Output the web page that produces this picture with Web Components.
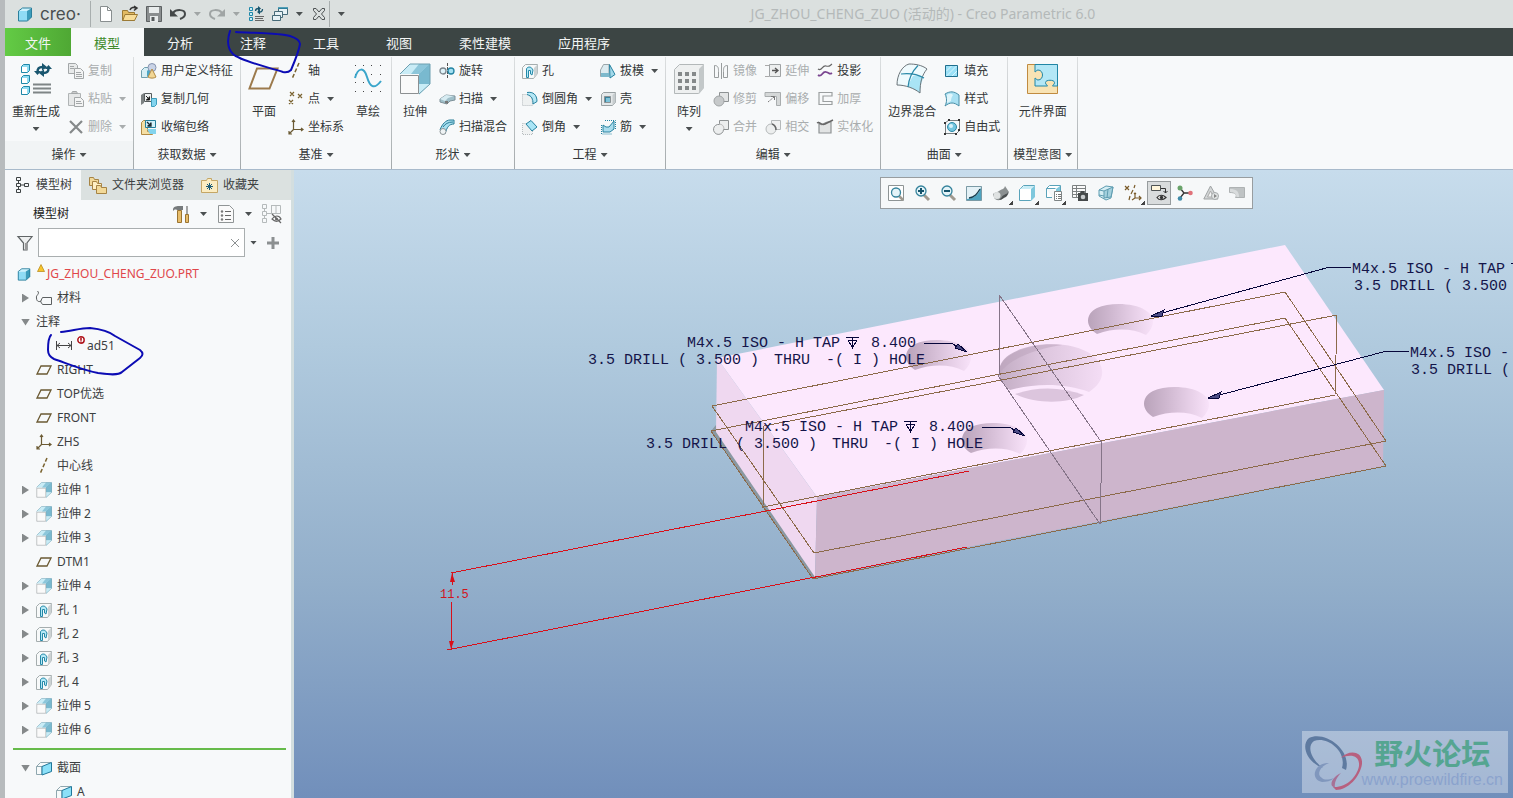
<!DOCTYPE html>
<html lang="zh-CN">
<meta charset="UTF-8">
<title>JG_ZHOU_CHENG_ZUO (活动的) - Creo Parametric 6.0</title>
<style>
  html, body {
    margin: 0;
    height: 100%;
    overflow: hidden;
  }
  body {
    font: 12px/18px "Noto Sans", "Noto Sans CJK SC", sans-serif;
    color: #3c4041;
  }
</style>

<creo-app></creo-app>

<script>
// ---- icon drawings: [viewBox size, svg content] ----
const CUBE = '<path fill="#8fdcf5" d="M1 5h9v10H1z"/><path fill="#cdf2fd" d="M1 5l4-3h10l-5 3z"/><path fill="#3b9cbb" d="M10 5l5-3v9l-5 4z"/><path fill="none" stroke="#2b7f9b" d="M1.500 5l4-3h9v9l-4 4h-9z"/>';
const PLANE = '<path fill="none" stroke="#6b5a33" stroke-width="1.3" d="M5 4h10l-4 8H1z"/>';
const EXTRUDE = '<path fill="#c9ecf6" d="M1 11L11 1h20L20 11z"/><path fill="#4f9fbb" d="M31 1v20L20 11z"/><path fill="#8cc6da" d="M20 1h11L20 11h-8z"/><path fill="#79b9cf" d="M31 1v20H20V11z"/><path fill="#c8ecf6" d="M20 21h11L20 32z"/><path fill="none" stroke="#6d9fb0" d="M1 11L11 1h20v20L20 31"/><path fill="#fafafa" stroke="#8c9092" d="M1.500 12.500h18v18h-18z"/>';
const HOLE = '<path fill="#f7f9f9" stroke="#a5adae" d="M.5 4.500l3-3h12v9l-4 5H.5z"/><path fill="#ccd2d3" d="M12 5l3.500-3.500v9L12 15z"/><path fill="#b5e9f7" stroke="#2589a8" d="M4.500 14.500V6C5 3.500 9 3.500 10 5.500l1 1.500-1 5-1.500-1V7.500h-2v7z"/>';
const SECTION = '<path fill="#f7fafa" stroke="#8fa7af" d="M.5 6.500l4-4h10.500M.5 6.500v8H6v-8H.500"/><path fill="#8be0f8" stroke="#20779a" d="M6 6.500l9.500-4v9L6 15z"/>';
const CSYS = '<path fill="none" stroke="#6b5a33" stroke-width="1.200" d="M5.500 1v9.500H15M5.500 10.500L1 15M4 3l1.500-2L7 3M13 9l2 1.500-2 1.500M1 12v3h3"/>';
const AXIS = '<path stroke="#7a6330" stroke-width="1.500" stroke-dasharray="4 2" d="M11 0L4 16"/>';
const LENS = '<path stroke="#a09a90" stroke-width="3" d="M10 10l5 5"/><circle cx="7" cy="6" r="5" fill="#e3f3f8" stroke="#35839c" stroke-width="1.300"/>';

const ICONS = {
  logo: [16, CUBE],
  part: [16, CUBE],
  fresh: [16, '<path fill="#fff" stroke="#888e8f" d="M2.500.5h7l4 4v11h-11z"/><path fill="none" stroke="#888e8f" d="M9.500.5v4h4"/>'],
  open: [16, '<path fill="#e2ba62" stroke="#9b7a35" d="M.5 4.500h5l1 2h6v8H.5z"/><path fill="#f8dd98" stroke="#9b7a35" d="M3 8.500h12.500l-3 6H.8z"/><path fill="none" stroke="#333" stroke-width="1.500" d="M8 4c1-3 4-3 6-2M12 0l3 2-3 2.500"/>'],
  save: [16, '<path fill="#8a8e8f" stroke="#5c6162" d="M.5.500h15v15H.5z"/><path fill="#e8ecec" d="M3 1h10v6H3zM4 10h8v6H4z"/><path fill="#55595a" d="M5.500 11h3v4h-3z"/>'],
  undo: [16, '<path fill="none" stroke="#444849" stroke-width="2" d="M3 7c3-4 12-4 12 1 0 2-2 4-5 5"/><path fill="#444849" d="M0 3v7.500h8z"/>'],
  redo: [16, '<path fill="none" stroke="#a0a5a5" stroke-width="2" d="M13 7C10 3 1 3 1 8c0 2 2 4 5 5"/><path fill="#a0a5a5" d="M16 3v7.500H8z"/>'],
  regen: [16, '<g fill="#c6eefa" stroke="#1f87a8"><path d="M1.500 1.500h3v3h-3zM1.500 6.500h3v3h-3zM1.500 11.500h3v3h-3z"/></g><path stroke="#666" d="M7 10.500h9M7 12.500h8M7 14.500h9"/><path fill="none" stroke="#19566f" stroke-width="1.300" d="M7.500 5c0-2 1-2.500 3-2.500M14.500 3c0 2-1 3-3 3"/><path fill="#19566f" d="M10 0l3 2.500-3 2.500zM12 3.500L9 6l3 2.500z"/>'],
  windows: [16, '<g fill="#e6f1f5" stroke="#466a78"><path d="M6.500 2.500h9v6h-9z"/><path d="M2.500 5.500h8v6h-8z"/><path d="M.5 9.500h8v5h-8z"/></g><path stroke="#2589a8" stroke-width="1.500" d="M6 2h10"/>'],
  closewin: [16, '<path fill="none" stroke="#4e5354" d="M2.500 2.500H5L8 6l3-3.500h2.500v2L10.500 8l3 3.500v2H11L8 10l-3 3.500H2.500v-2l3-3.500-3-3.500z"/>'],
  bigregen: [32, '<g fill="#8fdcf2" stroke="#1f87a8"><path d="M1.500 3.500l2-2h6v6l-2 2h-6zM1.500 14.500l2-2h6v6l-2 2h-6zM1.500 25.500l2-2h6v6l-2 2h-6z"/></g><path fill="#fff" d="M2 4h5v5H2zM2 15h5v5H2zM2 26h5v5H2z"/><path stroke="#7f8586" stroke-width="1.800" d="M13 21.500h18M13 25.500h18M13 29.500h18"/><path fill="none" stroke="#19566f" stroke-width="2.500" d="M17.500 9c0-4 1.500-5 5-5M28.500 5c0 4-1.500 5-5 5"/><path fill="#19566f" d="M22 0l5 4-5 4zM24 6l-5 4 5 4zM14 8h7l-3.500 4zM25 6h7l-3.500-4z"/>'],
  copy: [16, '<path fill="#e8eaea" stroke="#a3a7a8" d="M.5.500h7l2 2v8h-9z"/><path fill="#f3f4f4" stroke="#a3a7a8" d="M6.500 5.500h6l3 3v7h-9z"/><path stroke="#a3a7a8" d="M2 3.500h4M2 5.500h4M8 9.500h5M8 11.500h6M8 13.500h6"/>'],
  paste: [16, '<path fill="#e6e8e8" stroke="#b0b4b5" d="M.5 2.500h12v12H.5z"/><path fill="#ccc" stroke="#a3a7a8" d="M3.500 2.500l1-2h4l1 2z"/><path fill="#f3f4f4" stroke="#a3a7a8" d="M6.500 6.500h6l3 3v6h-9z"/><path stroke="#a3a7a8" d="M8 10.500h5M8 12.500h6"/>'],
  remove: [16, '<path stroke="#85898a" stroke-width="2.200" d="M2 2l12 12M14 2L2 14"/>'],
  udf: [16, '<path fill="#d6eef5" stroke="#6f9fae" d="M.5 7.500l3-3h5v8l-2 2h-6z"/><path fill="#4aa6c6" d="M6 8l3-3v7l-3 2z"/><circle cx="11" cy="4.500" r="4" fill="#c9d3e6" stroke="#8795b0"/><path fill="#f2d796" stroke="#b18a44" d="M11 6l4 8c-2 1.500-6 1.500-8 0z"/>'],
  copygeom: [16, '<path fill="#7d8283" d="M0 4l3-2v10l-3 2z"/><path fill="#eef1f1" stroke="#555b5c" d="M3.500 2.500h7v8h-7z"/><path stroke="#222" d="M5 5l3.500 3.500M8.500 5.500v3.500H5"/><path fill="#83d4ee" stroke="#3d9dbb" d="M10.500 7.500h5v6l-2 2h-3z"/>'],
  shrink: [16, '<path fill="#f5dfa4" stroke="#b18a44" d="M.5 3.500l2-2h4v11l5 1v2H.5z"/><path fill="#d2f1fa" stroke="#247f9d" d="M4.500 1.500h10v7h-10z"/><path stroke="#1c2c33" stroke-width="1.300" d="M6 3l4 4M10 3.500V7H6.500"/><path fill="#83d4ee" d="M6 10h9v5H9z"/>'],
  bigplane: [32, '<path fill="none" stroke="#9c7a4c" stroke-width="2" d="M9 5.500h20.500l-8 20H1.500z"/>'],
  axis: [16, AXIS], csys: [16, CSYS], plane: [16, PLANE],
  point: [16, '<path fill="none" stroke="#7a6330" stroke-width="1.200" d="M2 1l4 4M6 1L2 5M10 3l4 4M14 3l-4 4M1 9l4 4M5 9l-4 4"/>'],
  sketch: [32, '<g fill="#444"><path d="M3 2h1v1H3zM11 2h1v1h-1zM19 2h1v1h-1zM28 2h1v1h-1zM3 11h1v1H3zM28 11h1v1h-1zM11 19h1v1h-1zM3 19h1v1H3zM19 11h1v1h-1zM3 28h1v1H3zM11 28h1v1h-1zM19 28h1v1h-1zM28 28h1v1h-1z"/></g><path fill="none" stroke="#3aa6cb" stroke-width="2" d="M3 15C6 4 12 4 15 14s7 13 14 4"/>'],
  bigextrude: [32, EXTRUDE], extrude: [32, EXTRUDE], hole: [16, HOLE], section: [16, SECTION],
  revolve: [16, '<path stroke="#555" stroke-dasharray="3 1" d="M8.500 0v16"/><ellipse cx="4" cy="8" rx="3" ry="3" fill="#dff3f9" stroke="#7b858c" stroke-width="1.300"/><ellipse cx="12" cy="8" rx="3" ry="3" fill="#a3e0f2" stroke="#2384a3" stroke-width="1.300"/>'],
  sweep: [16, '<path fill="#9fbfc9" stroke="#7e9199" d="M1 8l6-4 9 1v4l-5 1-3 3-7-2z"/><path fill="#d7ecf2" d="M1 8l6-4 8 1-6 2-3 3z"/><path fill="#777" d="M6 10h3v3l-3-1z"/>'],
  blend: [16, '<path fill="#a7dfef" stroke="#287c97" d="M1 11C3 5 7 1 11 1h4v4c-5 0-7 3-9 10z"/><path fill="none" stroke="#287c97" d="M4 8c2-3 5-5 10-5"/><circle cx="4" cy="12.500" r="3" fill="#eef3f4" stroke="#8d9497"/>'],
  round: [16, '<path fill="#eef1f1" stroke="#b5bbbd" stroke-dasharray="1 1" d="M.5 3.500h5c4 2 5 4 5 11H.5z"/><path fill="#b5e7f5" stroke="#2682a0" d="M5 1.500c6-1 10 2 10 9l-4 2.500c0-5-1-8-6-9.500"/>'],
  chamfer: [16, '<path fill="#f0f2f2" stroke="#b5bbbd" stroke-dasharray="1 1" d="M.5 4.500h4l6 6v5H.5z"/><path fill="#a9e5f6" stroke="#2682a0" d="M9 1.500l6 6.500-5 4-6-7z"/>'],
  draft: [16, '<path fill="#dcebf0" stroke="#9aa5a9" d="M3.500 1.500H9v12H.5V7z"/><path fill="#a3d9ea" stroke="#2682a0" d="M9.500 1.500l5.500 10-5 3.500z"/><path fill="#7db9cc" d="M1 10h8v4H1z"/>'],
  shell: [16, '<path fill="#e4e8e9" stroke="#98a0a2" d="M1.500 3.500l2-2h12v10l-3 3h-11z"/><path fill="#c6ccce" d="M12.500 4l3-2.500v10l-3 3z"/><path fill="#38839d" stroke="#8a9193" d="M4.500 5.500h6v6h-6z"/><path fill="#7fc3d9" d="M6 7h4v4H6z"/>'],
  rib: [16, '<path fill="none" stroke="#2384a3" stroke-dasharray="1 1" d="M1.500 6v9h11M5 1.500h10.500v9"/><path fill="#a9dced" stroke="#2682a0" d="M3 6l3 2h3l5-6v8l-4 3H3z"/>'],
  pattern: [32, '<path fill="#eef0f0" stroke="#b3b8b9" d="M1.500 6.500l5-5h24v23l-5 6h-24z"/><path fill="#c3c8c9" d="M26 6l5-5v24l-5 6z"/><g fill="#85898a"><path d="M5 9h4v4H5zM12 9h4v4h-4zM19 9h4v4h-4zM5 16h4v4H5zM12 16h4v4h-4zM19 16h4v4h-4zM5 23h4v4H5zM12 23h4v4h-4zM19 23h4v4h-4z"/></g>'],
  mirror: [16, '<g fill="none" stroke="#989c9d"><path d="M1.500 2.500c4 0 4 3 4 6v6h-4zM14.500 2.500c-4 0-4 3-4 6v6h4zM8.500 0v16"/></g>'],
  trim: [16, '<path fill="#e3e5e5" stroke="#8e9293" d="M6.500 1.500h9v9h-9z"/><circle cx="6" cy="10" r="5" fill="#c6c9ca" stroke="#a0a4a5"/>'],
  merge: [16, '<path fill="#eceeee" stroke="#8e9293" d="M6.500 5.500v-4h9v9h-5a5 5 0 1 1-4-5z"/><path fill="none" stroke="#bbb" d="M6 5c3 0 5 2 5 5"/>'],
  extend: [16, '<path fill="#eceeee" stroke="#9fa3a4" d="M4.500 1.500h11v12h-11z"/><path stroke="#aaa" d="M0 2.500h4M0 13.500h4"/><path fill="none" stroke="#555" stroke-width="1.300" d="M7 7.500h5M10 5l3 2.500L10 10"/>'],
  offset: [16, '<path fill="#d5d8d8" stroke="#a9adae" d="M0 1.500h15.500v13h-4v-9H0z"/><path fill="none" stroke="#777" stroke-dasharray="2 1" d="M3 11l6-5"/><path fill="none" stroke="#777" d="M6 5.500h3.500V9"/>'],
  intersect: [16, '<path fill="#f0f1f1" stroke="#b5b9ba" d="M6.500 1.500h9v9h-9z"/><circle cx="6" cy="10" r="5" fill="#eceeee" stroke="#b5b9ba"/><path fill="none" stroke="#666" stroke-width="1.500" d="M7 5c3 1 4 3 4 6"/>'],
  project: [16, '<path fill="none" stroke="#666" stroke-width="1.200" d="M1 6c4 3 4-4 8-3s3 0 6-2"/><path fill="none" stroke="#7a4590" stroke-width="1.800" d="M1 12c4 3 4-4 8-3s3 3 6 1"/>'],
  thicken: [16, '<path fill="none" stroke="#9b9fa0" stroke-width="1.200" d="M15 1.500H2v12h13v-3H6V5h9z"/>'],
  solidify: [16, '<path fill="#e2e4e4" stroke="#8e9293" stroke-width="1.200" d="M2 4c4 5 5-3 12-1v11H2z"/><path fill="none" stroke="#666" stroke-width="1.500" d="M0 4c3-2 4 3 8 1s4-2 8-4"/>'],
  boundary: [32, '<path fill="#effafd" d="M1 22C1 12 6 3 13 1c6 0 13 1 18 5-5 6-7 13-7 24-6-5-15-8-23-8z"/><path fill="#a9e4f5" d="M17 13c5-1 8 0 11 1-3 5-4 10-4 16-4-3-8-5-12-6 1-4 3-8 5-11z"/><path fill="none" stroke="#6b7479" d="M1 22C1 12 6 3 13 1c6 0 13 1 18 5-5 6-7 13-7 24-6-5-15-8-23-8z"/><path fill="none" stroke="#2a89a8" stroke-width="1.200" d="M5 11c8-1 16 0 23 4M22 2.500c-5 5-9 12-10 21.500"/>'],
  fill: [16, '<path fill="#9be1f7" stroke="#1f6f8e" d="M1.500 2.500h12v11h-12z"/><path stroke="#d9f5fd" d="M2.500 8l5-5M2.500 13l10-10M8 13l5-5"/>'],
  style: [16, '<path fill="#a8e0f2" stroke="#4a8ea6" d="M1 3c5-3 9-3 14 1v11c-5-4-9-4-14 0 2-4 2-8 0-12z"/><path fill="#dff5fb" d="M3 4c3-2 5-1 6 0-2 3-2 5-2 6l-4 2z"/>'],
  freestyle: [16, '<path fill="none" stroke="#777d7f" d="M1.500 3.500l3-2h11v10l-3 3h-11z"/><circle cx="8" cy="8" r="4.500" fill="#74c6e0" stroke="#2d89a7"/><circle cx="7" cy="7" r="2" fill="#d8f2fa"/><g fill="#333"><path d="M0 3h2v2H0zM4 0h2v2H4zM14 0h2v2h-2zM14 10h2v2h-2zM11 14h2v2h-2zM0 14h2v2H0z"/></g>'],
  puzzle: [32, '<path fill="#f8e3b4" stroke="#c08b40" d="M.500 1.500h30v29h-30z"/><path fill="#b3e7f6" stroke="#2186a6" d="M8 1.500h22.500V23h-5c0-1 2-1 2-3.500 0-3-9-3-9 0 0 2.500 2 2.500 2 3.500H8v-8c1 0 1 2 3 2 6 0 6-10 0-10-2 0-2 2-3 2z"/>'],
  treetab: [16, '<g fill="none" stroke="#3d4243"><path d="M1.500.500h4v3h-4zM1.500 6.500h4v3h-4zM1.500 12.500h4v3h-4zM9.500 6.500h4v3h-4zM3.500 3.500v3M3.500 9.500v3M5.500 8h4"/></g>'],
  folders: [18, '<g fill="#f2d999" stroke="#a68445"><path d="M.5 1.500h4l1 2h4v6h-9z"/><path fill="#fff0c4" d="M3.500 5.500h4l1 2h4v6h-9z"/><path d="M7.500 9.500h4l1 2h5v6h-10z"/></g>'],
  favorites: [18, '<path fill="#fbecc2" stroke="#c4a666" d="M1.500 4.500h5l1-2h4v2h6v12h-16z"/><path stroke="#1a5b78" d="M9.500 7v7M6 10.500h7M7 8l5 5M12 8l-5 5"/>'],
  tools: [18, '<path fill="#777b7c" d="M1 4c1-3 4-3 7-3h3v4H5C3 4 2 5 1 6z"/><path fill="#e8bd6a" stroke="#9a7431" d="M5.500 5.500h4v12h-4z"/><path stroke="#777" stroke-width="1.300" d="M15 1v8"/><path fill="#e8bd6a" stroke="#9a7431" d="M13.500 9.500h3v8h-3z"/>'],
  settings: [18, '<path fill="#fafafa" stroke="#909596" d="M1.500.5h11l4 4v13h-15z"/><path stroke="#666" d="M8 6.500h6M8 10.500h6M8 14.500h6"/><g fill="#777"><circle cx="5" cy="6.500" r="1.200"/><circle cx="5" cy="10.500" r="1.200"/><circle cx="5" cy="14.500" r="1.200"/></g>'],
  hidetree: [20, '<g fill="none" stroke="#b5babb"><path d="M.5.500h4v4h-4zM.5 7.500h4v4h-4zM.5 14.500h4v4h-4zM9.500 1.500h9v8h-9zM2.500 4.500v3M2.500 11.500v3M5 9.500h5M9.500 1v9M14 1v8"/></g><path fill="none" stroke="#666" stroke-width="1.200" d="M10 15c3-4 7-4 9 0-3 3-6 3-9 0zM10 10l9 9"/><circle cx="14.500" cy="15" r="1.500" fill="#666"/>'],
  filter: [16, '<path fill="#eef0f0" stroke="#606566" stroke-width="1.200" d="M1 1.500h14L10 8v7H6.500V8z"/><path fill="#999" d="M8 8h2v7H8z"/>'],
  material: [16, '<path fill="none" stroke="#5c6061" d="M1.500 1c3 3-2 4-1 7 0 4 3 4 5 3M6.500 7.500h9v7h-9l-2-3z"/>'],
  dimension: [16, '<path fill="none" stroke="#444" d="M.5 3v9M15.500 3v9M1 7.500h14M4 5L1 7.500 4 10M12 5l3 2.500L12 10"/>'],
  error: [10, '<circle cx="5" cy="5" r="4" fill="#fff" stroke="#b0151c" stroke-width="1.800"/><path fill="#b0151c" d="M4 2h2v4H4zM4 7h2v1.500H4z"/>'],
  warn: [8, '<path fill="#f7c52d" stroke="#b58513" stroke-width=".7" d="M4 .5l3.500 7h-7z"/>'],
  refit: [16, '<path fill="#fff" stroke="#8e9495" d="M.5.500h15v15H.5z"/>' + '<path stroke="#a09a90" stroke-width="2.500" d="M11 11l4 4"/><circle cx="8" cy="7.500" r="4.500" fill="#e3f3f8" stroke="#35839c" stroke-width="1.300"/>'],
  zoomin: [16, LENS + '<path stroke="#15536b" stroke-width="2" d="M4 6h6M7 3v6"/>'],
  zoomout: [16, LENS + '<path stroke="#15536b" stroke-width="2" d="M4 6h6"/>'],
  repaint: [16, '<path fill="#4ea3bf" stroke="#7b9aa5" d="M.5 1.500h15v14H.5z"/><path fill="#e4f1f6" d="M1 2h14c-2 7-6 11-14 12z"/><path fill="none" stroke="#153c4c" stroke-width="1.300" d="M3 13c6-1 8-4 11-9"/>'],
  shade: [16, '<path fill="#8b9091" d="M0 10c0-3 4-2 6-4s5-1 6-5l4 6c-1 5-5 3-6 6-3 4-9 2-9-1z"/><circle cx="4" cy="10.500" r="3.500" fill="#dfe2e2"/><path fill="#4b4f50" d="M9 12c1-3 5-2 6-5 0 4-2 5-4 6s-3 2-5 2z"/>'],
  box: [16, '<path fill="#fff" stroke="#5aa3ba" d="M.5 4.500l4-4h11v11l-4 4H.5z"/><path fill="#7fc8dd" d="M12 4l4-4v12l-4 4z"/><path fill="#c9edf6" d="M1 4l4-3h10l-4 3z"/>'],
  views: [16, '<path fill="#fff" stroke="#5aa3ba" d="M.5 3.500l3-3h11v6M.5 3.500h9M.5 3.500v9H6"/><path fill="#7fc8dd" d="M10 4l4-3v6h-4z"/><path fill="#fff" stroke="#7e8485" d="M8.500 6.500h7v9h-7z"/><path stroke="#777" stroke-dasharray="1 1 3" d="M10 9.500h5M10 11.500h5M10 13.500h5"/>'],
  camera: [16, '<path fill="#fafafa" stroke="#7c8182" d="M.5.500h13v12H.5zM.5 3.500h13M.5 6.500h13M.5 9.500h13M4.500 0v12"/><path fill="#45494a" d="M6 8h2l1-2h3l1 2h3v8H6z"/><circle cx="11" cy="12" r="2.300" fill="#c8ccce"/>'],
  persp: [16, '<path fill="#d5eef4" stroke="#5f9db1" d="M1 5l7-4 7 1-2 11-5 2-7-4z"/><path fill="#a3d0dd" stroke="#5f9db1" d="M6 6l9-4-2 10-7 1z"/><path stroke="#5f9db1" d="M1 5l5 1M10 4l-1 9M1 10l5 1"/>'],
  datum: [16, '<path fill="none" stroke="#7a5b2a" stroke-width="1.200" d="M0 1l4 4M4 1L0 5M10 0L9 3M8 5l-2 4M5 11l-1 4M10 8v5h6M10 13l-3 2M9 9l1-1 1 1M14 11l2 2-2 2"/>'],
  annot: [16, '<path fill="#fff6dc" stroke="#4e5354" d="M.5.500h9v5h-9z"/><path fill="none" stroke="#333" d="M10 3.500h4.500V8M12.500 6l2 2 2-2"/><path fill="#f2f2f2" stroke="#333" stroke-width="1.200" d="M6 12.500c2-3 6-3 9 0-3 3-7 3-9 0z"/><circle cx="10.500" cy="12.500" r="1.700" fill="#333"/>'],
  spin: [16, '<path fill="none" stroke="#333" stroke-width="1.300" d="M3 3l4 5h7M7 8l-4 5"/><circle cx="3" cy="3" r="2.500" fill="#69a36a"/><circle cx="13.500" cy="8" r="2.300" fill="#e0727a"/><circle cx="3" cy="13.500" r="2.300" fill="#3f8ba9"/>'],
  simulate: [16, '<path fill="#d3d6d7" stroke="#9fa3a4" d="M7.500 1L15 14H.8z"/><path fill="#f4f5f5" stroke="#aaa" d="M7.500 6l3 6h-6z"/><circle cx="12" cy="11" r="3.500" fill="#e2e5e5" stroke="#a5a9aa"/><path fill="#888" d="M11 9l3 2-3 2z"/>'],
  flag: [16, '<path fill="#bfc3c4" stroke="#aeb2b3" d="M.5 2.500h15v10h-9c2-3 0-5-6-5z"/><path fill="#d9dcdd" d="M1 4c6 0 9 2 9 8H7.500c0-3-2-5-6.500-5z"/>'],
};

// shared rules, repeated in each shadow root that shows a drop-down mark or a button
const COMMON = `
  * { box-sizing: border-box; }
  button { font: inherit; color: inherit; background: none; border: 0; padding: 0; margin: 0; }
  .arrow { flex: none; width: 7px; height: 4px; background: #4b5051; clip-path: polygon(0 0, 100% 0, 50% 100%); }
`;

class CreoIcon extends HTMLElement {
  connectedCallback() {
    const [box, art] = ICONS[this.getAttribute('name')];
    const size = this.getAttribute('size') || 16;
    this.attachShadow({mode: 'open'}).innerHTML = `
      <style>
        :host { display: block; flex: none; width: ${size}px; height: ${size}px; }
        svg { display: block; width: 100%; height: 100%; overflow: visible; }
      </style>
      <svg viewBox="0 0 ${box} ${box}" aria-hidden="true">${art}</svg>`;
  }
}
customElements.define('creo-icon', CreoIcon);


// command in the ribbon; add "big" for the tall form, "menu" for a drop-down mark
class CreoCommand extends HTMLElement {
  connectedCallback() {
    const big = this.hasAttribute('big');
    const off = this.hasAttribute('off');
    this.attachShadow({mode: 'open'}).innerHTML = `
      <style>${COMMON}
        :host { display: block; white-space: nowrap; }
        button { display: flex; align-items: center; gap: 4px; height: 28px; }
        button.big { flex-direction: column; gap: 8px; height: 84px; min-width: 32px; padding-top: 6px; }
        button:disabled { color: #a9adae; }
        button:disabled .arrow { background: #a9adae; }
        .arrow { margin-left: 3px; }
        .big .arrow { margin: -2px 0 0; }
      </style>
      <button class="${big ? 'big' : ''}" ${off ? 'disabled' : ''}>
        <creo-icon name="${this.getAttribute('icon')}" size="${big ? 32 : 16}"></creo-icon>
        <span><slot></slot></span>
        ${this.hasAttribute('menu') ? '<i class="arrow"></i>' : ''}
      </button>`;
  }
}
customElements.define('creo-command', CreoCommand);


class CreoGroup extends HTMLElement {
  connectedCallback() {
    this.attachShadow({mode: 'open'}).innerHTML = `
      <style>${COMMON}
        :host {
          display: flex; flex-direction: column; flex: none;
          border-right: 1px solid; border-image: linear-gradient(#dde0e1, #a3a9ab) 1;
        }
        .body { display: flex; justify-content: center; gap: 8px; height: 84px; padding: 0 7px; }
        ::slotted(div) { display: flex; flex-direction: column; }
        .label { display: flex; align-items: center; justify-content: center; gap: 4px; height: 28px; padding: 0 5px; }
        :host([shaded]) .label { background: #f1f4f5; }
      </style>
      <div class="body"><slot></slot></div>
      <button class="label">${this.getAttribute('label')}<i class="arrow"></i></button>`;
  }
}
customElements.define('creo-group', CreoGroup);


class CreoTitlebar extends HTMLElement {
  connectedCallback() {
    const items = ['fresh:新建', 'open:打开', 'save:保存', 'undo:撤销', '', 'redo:重做', '', 'regen:重新生成', 'windows:窗口', '', 'closewin:关闭'];
    this.attachShadow({mode: 'open'}).innerHTML = `
      <style>${COMMON}
        :host { display: flex; align-items: center; height: 28px; background: #dbe0df; padding-left: 12px; }
        .name { font-family: Inter, sans-serif; font-size: 17px; color: #4a4f51; margin-left: 7px; }
        .quick { display: flex; align-items: center; gap: 8px; height: 26px; margin-left: 9px; padding: 0 2px 0 7px; border: solid #a8aeae; border-width: 0 1px; }
        .dim { background: #a0a5a5; }
        .last { margin-left: 8px; }
        .title { flex: 1; text-align: center; font-size: 14px; color: #b4b9b9; padding-right: 12px; }
      </style>
      <creo-icon name="logo"></creo-icon>
      <span class="name">creo·</span>
      <div class="quick">
        ${items.map((it, i) => {
          if (!it) return `<i class="arrow ${i < 8 ? 'dim' : ''}"></i>`;
          const [icon, label] = it.split(':');
          return `<button aria-label="${label}"><creo-icon name="${icon}"></creo-icon></button>`;
        }).join('')}
      </div>
      <i class="arrow last"></i>
      <div class="title">JG_ZHOU_CHENG_ZUO (活动的) - Creo Parametric 6.0</div>`;
  }
}
customElements.define('creo-titlebar', CreoTitlebar);


class CreoTabs extends HTMLElement {
  connectedCallback() {
    const tabs = ['模型', '分析', '注释', '工具', '视图', '柔性建模', '应用程序'];
    this.attachShadow({mode: 'open'}).innerHTML = `
      <style>${COMMON}
        :host { display: flex; height: 29px; background: #3c4544; color: #f3f5f5; font-size: 13px; }
        button { padding: 0 24px 0 23px; }
        .file { padding: 0 20px; background: linear-gradient(90deg, #63cb45, #4fa834); }
        .active { background: #f7f9fa; color: #418b2c; }
      </style>
      <button class="file">文件</button>
      ${tabs.map((t, i) => `<button class="${i ? '' : 'active'}">${t}</button>`).join('')}`;
  }
}
customElements.define('creo-tabs', CreoTabs);


class CreoRibbon extends HTMLElement {
  connectedCallback() {
    this.attachShadow({mode: 'open'}).innerHTML = `
      <style>
        :host { display: flex; background: #f7f9fa; border-bottom: 1px solid #a8bacb; color: #333738; padding-top: 1px; height: 112px; box-sizing: content-box; margin-top: -1px; }
      </style>
      <creo-group label="操作" shaded>
        <creo-command big menu icon="bigregen">重新生成</creo-command>
        <div>
          <creo-command off icon="copy">复制</creo-command>
          <creo-command off menu icon="paste">粘贴</creo-command>
          <creo-command off menu icon="remove">删除</creo-command>
        </div>
      </creo-group>
      <creo-group label="获取数据">
        <div>
          <creo-command icon="udf">用户定义特征</creo-command>
          <creo-command icon="copygeom">复制几何</creo-command>
          <creo-command icon="shrink">收缩包络</creo-command>
        </div>
      </creo-group>
      <creo-group label="基准">
        <creo-command big icon="bigplane">平面</creo-command>
        <div>
          <creo-command icon="axis">轴</creo-command>
          <creo-command menu icon="point">点</creo-command>
          <creo-command icon="csys">坐标系</creo-command>
        </div>
        <creo-command big icon="sketch">草绘</creo-command>
      </creo-group>
      <creo-group label="形状">
        <creo-command big icon="bigextrude">拉伸</creo-command>
        <div>
          <creo-command icon="revolve">旋转</creo-command>
          <creo-command menu icon="sweep">扫描</creo-command>
          <creo-command icon="blend">扫描混合</creo-command>
        </div>
      </creo-group>
      <creo-group label="工程">
        <div>
          <creo-command icon="hole">孔</creo-command>
          <creo-command menu icon="round">倒圆角</creo-command>
          <creo-command menu icon="chamfer">倒角</creo-command>
        </div>
        <div>
          <creo-command menu icon="draft">拔模</creo-command>
          <creo-command icon="shell">壳</creo-command>
          <creo-command menu icon="rib">筋</creo-command>
        </div>
      </creo-group>
      <creo-group label="编辑">
        <creo-command big menu icon="pattern">阵列</creo-command>
        <div>
          <creo-command off icon="mirror">镜像</creo-command>
          <creo-command off icon="trim">修剪</creo-command>
          <creo-command off icon="merge">合并</creo-command>
        </div>
        <div>
          <creo-command off icon="extend">延伸</creo-command>
          <creo-command off icon="offset">偏移</creo-command>
          <creo-command off icon="intersect">相交</creo-command>
        </div>
        <div>
          <creo-command icon="project">投影</creo-command>
          <creo-command off icon="thicken">加厚</creo-command>
          <creo-command off icon="solidify">实体化</creo-command>
        </div>
      </creo-group>
      <creo-group label="曲面">
        <creo-command big icon="boundary">边界混合</creo-command>
        <div>
          <creo-command icon="fill">填充</creo-command>
          <creo-command icon="style">样式</creo-command>
          <creo-command icon="freestyle">自由式</creo-command>
        </div>
      </creo-group>
      <creo-group label="模型意图">
        <creo-command big icon="puzzle">元件界面</creo-command>
      </creo-group>`;
  }
}
customElements.define('creo-ribbon', CreoRibbon);


// one line of the model tree; state = open | closed | nothing
class TreeItem extends HTMLElement {
  connectedCallback() {
    const state = this.getAttribute('state');
    const icon = this.getAttribute('icon');
    const mark = this.getAttribute('mark');
    this.attachShadow({mode: 'open'}).innerHTML = `
      <style>${COMMON}
        :host { display: flex; flex: none; align-items: center; gap: 5px; height: 24px; padding-left: 15px; }
        :host([level="root"]) { padding-left: 12px; gap: 2px; color: #e0474a; }
        :host([level="2"]) { padding-left: 35px; }
        .toggle { width: 11px; height: 16px; display: flex; align-items: center; justify-content: center; }
        .toggle i { background: #85898a; }
        .closed i { width: 7px; height: 9px; clip-path: polygon(0 0, 100% 50%, 0 100%); }
        .open i { width: 9px; height: 7px; clip-path: polygon(0 0, 100% 0, 50% 100%); }
        .mark { align-self: flex-start; padding-top: 2px; margin-right: -3px; }
        :host([level="root"]) .mark { margin: 0 0 0 4px; }
      </style>
      ${state ? `<button class="toggle ${state}" aria-label="展开"><i></i></button>` : this.getAttribute('level') === 'root' ? '' : '<span class="toggle"></span>'}
      ${icon ? `<creo-icon name="${icon}" size="${icon === 'part' ? 14 : 16}"></creo-icon>` : ''}
      ${mark ? `<span class="mark"><creo-icon name="${mark}" size="8"></creo-icon></span>` : ''}
      <span><slot></slot></span>`;
  }
}
customElements.define('tree-item', TreeItem);


class CreoSidebar extends HTMLElement {
  connectedCallback() {
    this.attachShadow({mode: 'open'}).innerHTML = `
      <style>${COMMON}
        :host { display: flex; flex-direction: column; flex: none; box-sizing: border-box; width: 289px; background: #f7f9fa; border-right: 3px solid #d3dedf; overflow: hidden; }
        .tabs { display: flex; flex: none; height: 30px; background: #dbe1e0; }
        .tabs button { display: flex; align-items: center; gap: 5px; padding: 0 8px; }
        .tabs .active { background: #f7f9fa; padding: 0 9px 0 10px; }
        .head { display: flex; flex: none; align-items: center; gap: 10px; height: 28px; padding: 0 9px 0 28px; }
        h1 { font: inherit; flex: 1; margin: 0; color: #222; }
        .search { display: flex; flex: none; align-items: center; gap: 5px; padding: 0 12px; margin-bottom: 5px; }
        .field { display: flex; flex: 1; height: 29px; background: #fff; border: 1px solid #a9aeaf; align-items: center; padding-right: 4px; }
        input { flex: 1; min-width: 0; height: 100%; border: 0; outline: 0; background: none; font: inherit; }
        .clear { width: 10px; height: 10px; }
        .add { margin-left: 5px; }
        svg { display: block; }
        hr { flex: none; height: 2px; margin: 6px 5px 6px 8px; border: 0; background: #66bb4a; }
      </style>
      <div class="tabs">
        <button class="active"><creo-icon name="treetab"></creo-icon>模型树</button>
        <button><creo-icon name="folders" size="18"></creo-icon>文件夹浏览器</button>
        <button><creo-icon name="favorites" size="18"></creo-icon>收藏夹</button>
      </div>
      <div class="head">
        <h1>模型树</h1>
        <button aria-label="工具"><creo-icon name="tools" size="18"></creo-icon></button>
        <i class="arrow"></i>
        <button aria-label="设置"><creo-icon name="settings" size="18"></creo-icon></button>
        <i class="arrow"></i>
        <button aria-label="隐藏"><creo-icon name="hidetree" size="20"></creo-icon></button>
      </div>
      <div class="search">
        <creo-icon name="filter"></creo-icon>
        <div class="field">
          <input type="text" aria-label="过滤">
          <button class="clear" aria-label="清除"><svg width="10" height="10"><path stroke="#8d9192" d="M1 1l8 8M9 1L1 9"/></svg></button>
        </div>
        <i class="arrow"></i>
        <button class="add" aria-label="添加"><svg width="12" height="12"><path stroke="#8c9091" stroke-width="3" d="M6 0v12M0 6h12"/></svg></button>
      </div>
      <tree-item level="root" icon="part" mark="warn">JG_ZHOU_CHENG_ZUO.PRT</tree-item>
      <tree-item state="closed" icon="material">材料</tree-item>
      <tree-item state="open">注释</tree-item>
      <tree-item level="2" icon="dimension" mark="error">ad51</tree-item>
      <tree-item icon="plane">RIGHT</tree-item>
      <tree-item icon="plane">TOP优选</tree-item>
      <tree-item icon="plane">FRONT</tree-item>
      <tree-item icon="csys">ZHS</tree-item>
      <tree-item icon="axis">中心线</tree-item>
      <tree-item state="closed" icon="extrude">拉伸 1</tree-item>
      <tree-item state="closed" icon="extrude">拉伸 2</tree-item>
      <tree-item state="closed" icon="extrude">拉伸 3</tree-item>
      <tree-item icon="plane">DTM1</tree-item>
      <tree-item state="closed" icon="extrude">拉伸 4</tree-item>
      <tree-item state="closed" icon="hole">孔 1</tree-item>
      <tree-item state="closed" icon="hole">孔 2</tree-item>
      <tree-item state="closed" icon="hole">孔 3</tree-item>
      <tree-item state="closed" icon="hole">孔 4</tree-item>
      <tree-item state="closed" icon="extrude">拉伸 5</tree-item>
      <tree-item state="closed" icon="extrude">拉伸 6</tree-item>
      <hr>
      <tree-item state="open" icon="section">截面</tree-item>
      <tree-item level="2" icon="section">A</tree-item>`;
  }
}
customElements.define('creo-sidebar', CreoSidebar);


class ViewToolbar extends HTMLElement {
  connectedCallback() {
    const groups = [
      ['refit', 'zoomin', 'zoomout', 'repaint'],
      ['shade+', 'box+'],
      ['views+', 'camera', 'persp'],
      ['datum+', 'annot*', 'spin', 'simulate', 'flag'],
    ];
    const button = key => {
      const name = key.replace(/\W/, '');
      const cls = key.endsWith('+') ? 'more' : key.endsWith('*') ? 'on' : '';
      return `<button class="${cls}" aria-label="${name}"><creo-icon name="${name}"></creo-icon></button>`;
    };
    this.attachShadow({mode: 'open'}).innerHTML = `
      <style>${COMMON}
        :host { display: flex; gap: 3px; padding: 3px; background: #f6f8f9; border: 1px solid #989da0; }
        div { display: flex; gap: 2px; }
        button { width: 24px; height: 24px; padding: 4px; }
        .on { background: #d9dcdd; border: 1px solid #979c9e; padding: 3px; }
        .more { background: linear-gradient(135deg, transparent 50%, #444 50%) 100% 100% / 4px 4px no-repeat; }
      </style>
      ${groups.map(g => `<div>${g.map(button).join('')}</div>`).join('')}`;
  }
}
customElements.define('view-toolbar', ViewToolbar);


class SiteMark extends HTMLElement {
  connectedCallback() {
    this.attachShadow({mode: 'open'}).innerHTML = `
      <style>
        :host { display: flex; align-items: center; background: rgba(255, 255, 255, .36); padding: 0 5px 0 3px; height: 62px; }
        div { display: flex; flex-direction: column; align-items: center; }
        b { font: 700 29px/36px "Noto Sans CJK SC", sans-serif; color: #55a591; }
        span { font: 16px/20px "Liberation Sans", sans-serif; color: #8ba3cd; }
      </style>
      <svg width="57" height="60">
        <path fill="#5e7aa0" d="M41 38C47 17 19-2 4 6-5 14 3 31 18 36 7 28 1 15 9 9 22 4 42 19 37 36z"/>
        <path fill="#b7607f" d="M36 26c7-8 22-8 21 6C55 45 43 58 31 58l-3-3c13 1 24-10 26-21 1-11-9-12-18-8z"/>
        <path fill="#8097bd" d="M24 31c-14-1-20 16-7 19 4 0 9-1 12-4-6 2-10 2-12 0-6-3-2-12 7-15z"/>
        <path fill="#a77196" d="M36 41c-7 3-11 9-9 13l3 2c-1-6 2-11 6-15z"/>
      </svg>
      <div><b>野火论坛</b><span>www.proewildfire.cn</span></div>`;
  }
}
customElements.define('site-mark', SiteMark);


class ModelView extends HTMLElement {
  connectedCallback() {
    // hole note with the depth symbol between its two parts
    const note = (x, y) => `
      <text x="${x}" y="${y}">M4x.5 ISO - H TAP</text>
      <path class="ink" d="M${x + 159} ${y - 10}h13M${x + 165} ${y - 10}v10l-4-7h9l-4 7"/>
      <text x="${x + 184}" y="${y}">8.400</text>
      <text x="${x - 99}" y="${y + 17}">3.5 DRILL ( 3.500 )</text>
      <text x="${x + 87}" y="${y + 17}">THRU</text>
      <text x="${x + 139}" y="${y + 17}">-( I ) HOLE</text>
      <path class="ink" d="M${x + 237} ${y - 4}h27l16 9"/>
      <path class="ink head" d="M${x + 280} ${y + 5}l-12 -4l3 -4z"/>`;
    this.attachShadow({mode: 'open'}).innerHTML = `
      <style>
        :host { display: block; flex: 1; min-width: 0; position: relative; overflow: hidden; background: linear-gradient(#c7dcec, #b0cade 28%, #92aeca 66%, #718fbb); }
        .scene { display: block; width: 100%; height: 100%; }
        text { font: 15px "Liberation Mono", monospace; fill: #14144a; white-space: pre; }
        .small { font-size: 12px; fill: #d0141c; }
        .ink { fill: none; stroke: #06063a; shape-rendering: crispEdges; }
        .head { fill: #4d4d86; }
        .datum { fill: none; stroke: #8c6a4a; shape-rendering: crispEdges; }
        .side { fill: none; stroke: #857488; shape-rendering: crispEdges; }
        .dim { fill: none; stroke: #d8101a; shape-rendering: crispEdges; }
        .red { fill: #d8101a; }
        view-toolbar { position: absolute; top: 7px; left: 586px; }
        site-mark { position: absolute; right: 5px; bottom: 5px; }
      </style>
      <svg class="scene">
        <defs>
          <linearGradient id="bore"><stop offset="0" stop-color="#b9a3ba"/><stop offset=".35" stop-color="#cfb8d0"/><stop offset=".7" stop-color="#e6cfe7"/><stop offset="1" stop-color="#f8e2f9"/></linearGradient>
          <linearGradient id="wall"><stop offset="0" stop-color="#c3adc4"/><stop offset=".4" stop-color="#dcc5dd"/><stop offset="1" stop-color="#f4ddf5"/></linearGradient>
          <path id="hole" fill="url(#bore)" d="M1097 334C1085 327 1085 314 1097 308C1110 302 1134 303 1145 310C1156 316 1155 327 1146 335C1132 328 1114 328 1097 334z"/>
        </defs>
        <g transform="translate(-294 -170)">
          <path fill="#8998a2" d="M711 431L813 579L819 577L716 425z"/>
          <path fill="#fce8fd" d="M717 358L1285 245L1384 390L817 497z"/>
          <path fill="#efd8f0" d="M717 358L817 497L815 577L716 432z"/>
          <path fill="#cdb5cc" d="M817 497L1384 390L1383 466L815 577z"/>

          <use href="#hole"/>
          <use href="#hole" x="56" y="83"/>
          <use href="#hole" x="-182" y="36"/>
          <use href="#hole" x="-126" y="119"/>
          <path fill="url(#wall)" d="M1010 390C996 380 995 365 1009 355C1032 340 1073 341 1092 355C1107 366 1105 382 1089 392C1066 383 1034 383 1010 390z"/>
          <path fill="#b9a2ba" fill-opacity=".5" d="M999 374C998 354 1030 342 1062 345C1036 349 1010 358 999 374z"/>
          <path fill="#dcc5dd" d="M1015 394C1038 386 1062 387 1084 395C1066 404 1036 404 1015 394z"/>

          <path class="datum" d="M712 406L1285 292L1386 441L814 553z"/>
          <path class="datum" d="M711 431L1285 318L1386 466L813 579z"/>
          <path class="datum" d="M764 426L1337 315L1335 395L763 507z"/>
          <path class="side" d="M1000 296L1102 443L1100 524L999 377z"/>

          <path class="dim" d="M451 573L969 471M447 650L967 547M452.500 573v12M451.500 602v47"/>
          <path class="red" d="M452 573l3 9h-5zM451 649l3-8h-5z"/>
          <text class="small" x="440" y="598">11.5</text>

          ${note(687, 347)}
          ${note(745, 431)}
          <text x="1352" y="273">M4x.5 ISO - H TAP</text>
          <path class="ink" d="M1511 263h12"/>
          <text x="1354" y="290">3.5 DRILL ( 3.500</text>
          <path class="ink" d="M1351 267.500h-23L1151 316"/>
          <path class="ink head" d="M1151 316l13-6-2 6z"/>
          <text x="1410" y="357">M4x.5 ISO -</text>
          <text x="1411" y="374">3.5 DRILL (</text>
          <path class="ink" d="M1409 351.500h-24L1208 398"/>
          <path class="ink head" d="M1208 398l13-6-2 6z"/>
        </g>
      </svg>
      <view-toolbar></view-toolbar>
      <site-mark></site-mark>`;
  }
}
customElements.define('model-view', ModelView);


// freehand pen marks over the window
class PenMarks extends HTMLElement {
  connectedCallback() {
    this.attachShadow({mode: 'open'}).innerHTML = `
      <style>
        :host { position: absolute; inset: 0; pointer-events: none; }
        svg { width: 100%; height: 100%; }
        path { fill: none; stroke: #0c0cb4; stroke-width: 2; stroke-linecap: round; stroke-linejoin: round; }
      </style>
      <svg>
        <path d="M230 31C227 40 227 48 233 54C240 61 268 67 283 72Q288 73 291 70C294 63 299 50 300 44C300 40 296 38 290 36C280 33 255 33 236 32"/>
        <path d="M61 332C72 331 80 328 90 328C100 329 110 332 115 336L140 350Q145 354 140 358L122 372C118 376 106 374 98 373C82 370 66 363 54 359Q48 356 48 350C48 344 48 338 51 335"/>
      </svg>`;
  }
}
customElements.define('pen-marks', PenMarks);


class CreoApp extends HTMLElement {
  connectedCallback() {
    this.attachShadow({mode: 'open'}).innerHTML = `
      <style>
        :host { display: flex; flex-direction: column; height: 100vh; box-sizing: border-box; border-left: 5px solid #b7bbbd; position: relative; overflow: hidden; }
        main { display: flex; flex: 1; min-height: 0; }
        pen-marks { left: -5px; }
      </style>
      <creo-titlebar></creo-titlebar>
      <creo-tabs></creo-tabs>
      <creo-ribbon></creo-ribbon>
      <main>
        <creo-sidebar></creo-sidebar>
        <model-view></model-view>
      </main>
      <pen-marks></pen-marks>`;
  }
}
customElements.define('creo-app', CreoApp);
</script>

</html>
